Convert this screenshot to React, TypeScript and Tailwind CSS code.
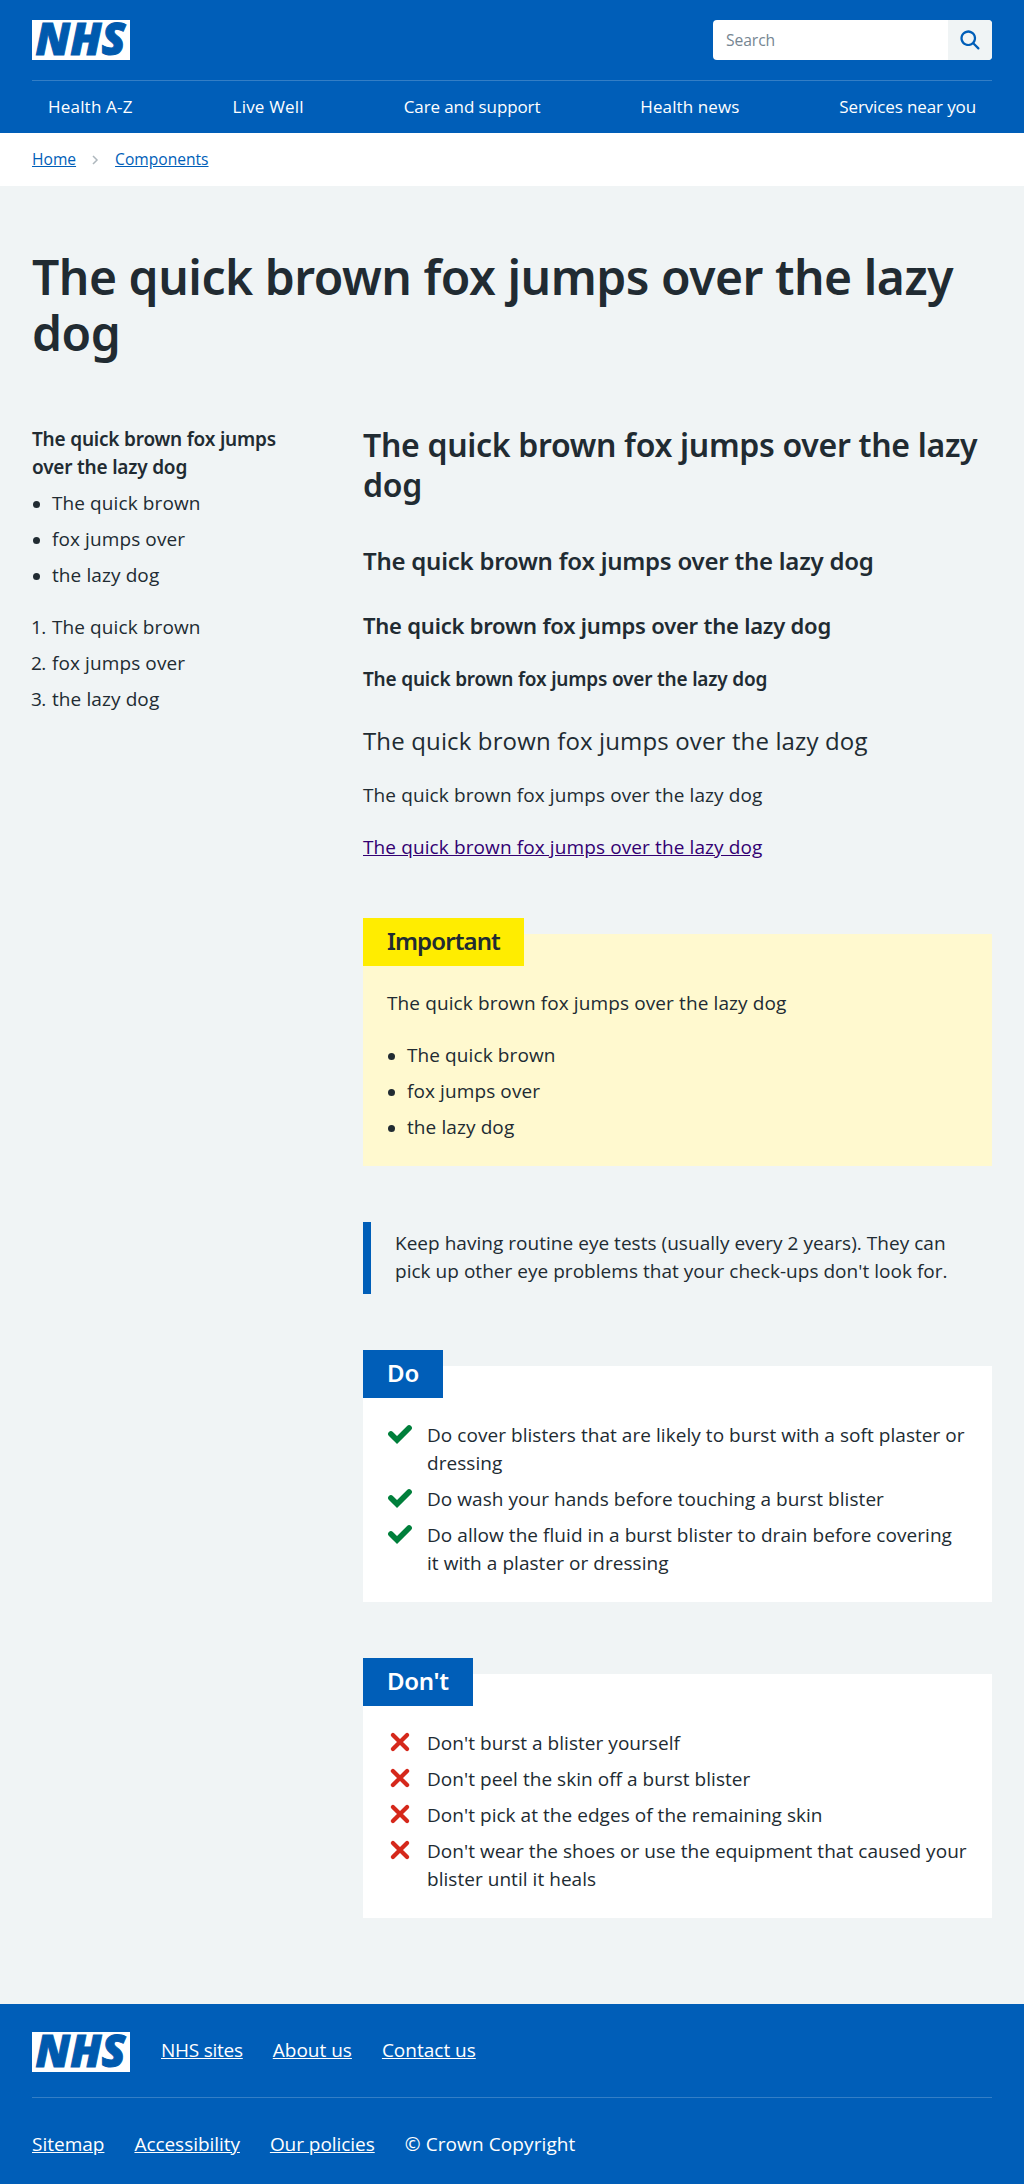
import type { ReactNode } from "react";

const PANGRAM = "The quick brown fox jumps over the lazy dog";
const LINES = ["The quick brown", "fox jumps over", "the lazy dog"];

function Logo() {
  return (
    <svg width="98" height="40" viewBox="0 0 98 40" role="img" aria-label="NHS" className="block shrink-0 overflow-visible">
      <rect width="98" height="40" fill="#fff" />
      <text
        x="3.5"
        y="35.3"
        fontSize="44.6"
        fontWeight="800"
        fontStyle="italic"
        textLength="90"
        lengthAdjust="spacingAndGlyphs"
        fill="#005aae"
        stroke="#005aae"
        strokeWidth="1"
        className="font-['Open_Sans',sans-serif]"
      >
        NHS
      </text>
    </svg>
  );
}

function SearchIcon() {
  return (
    <svg width="27" height="27" viewBox="0 0 24 24" fill="#005eb8" aria-hidden="true">
      <path d="M19.71 18.29l-4.11-4.1a7 7 0 1 0-1.41 1.41l4.1 4.11a1 1 0 0 0 1.42 0 1 1 0 0 0 0-1.42zM5 10a5 5 0 1 1 5 5 5 5 0 0 1-5-5z" />
    </svg>
  );
}

function Tick() {
  return (
    <svg width="34" height="34" viewBox="0 0 24 24" fill="none" stroke="#007f3b" strokeWidth="4" strokeLinecap="round" aria-hidden="true">
      <path d="M18.4 7.8l-8.5 8.4L5.6 12" />
    </svg>
  );
}

function Cross() {
  return (
    <svg width="34" height="34" viewBox="0 0 24 24" fill="none" stroke="#d5281b" strokeWidth="3" strokeLinecap="round" aria-hidden="true">
      <path d="M7 7l10 10M17 7L7 17" />
    </svg>
  );
}

function BulletList() {
  return (
    <ul className="flex flex-col gap-2 tracking-[0.1px]">
      {LINES.map((line) => (
        <li key={line} className="flex">
          <span className="mt-[11.5px] ml-[0.5px] mr-[12.5px] size-[7px] shrink-0 rounded-full bg-[#212b32]" />
          {line}
        </li>
      ))}
    </ul>
  );
}

function Card({ label, labelClass, bodyClass, children }: { label: string; labelClass: string; bodyClass: string; children: ReactNode }) {
  return (
    <section className={`mt-[72px] flex flex-col px-6 pb-[25px] ${bodyClass}`}>
      <h3 className={`-ml-6 -mt-4 mb-[23px] h-12 px-6 pt-[7px] font-['Noto_Sans',sans-serif] text-2xl leading-8 font-semibold whitespace-nowrap ${labelClass}`}>
        {label}
      </h3>
      {children}
    </section>
  );
}

function IconList({ icon, items, className }: { icon: ReactNode; items: string[]; className: string }) {
  return (
    <ul className={`flex flex-col gap-2 ${className}`}>
      {items.map((item) => (
        <li key={item} className="flex">
          <span className="-mt-1 -mb-2 -ml-1 mr-[10px] h-[34px] w-[34px] shrink-0">{icon}</span>
          <span>{item}</span>
        </li>
      ))}
    </ul>
  );
}

export default function App() {
  return (
    <div className="w-full bg-[#f0f4f5] font-['Open_Sans','Noto_Sans',sans-serif] text-[19px] leading-7 text-[#212b32]">
      <header className="bg-[#005eb8] px-8 text-white">
        <div className="flex items-start justify-between pt-5 pb-5">
          <Logo />
          <div className="flex h-10 w-[279px] overflow-hidden rounded bg-white">
            <div className="flex-1 pl-[13px] pt-[6px] text-[15.7px] tracking-[-0.1px] text-[#768692]">Search</div>
            <div className="w-11 bg-[#f0f4f5] pl-[9px] pt-[7px]">
              <SearchIcon />
            </div>
          </div>
        </div>
        <nav className="flex h-[53px] justify-between border-t border-[#337ec6] px-4 pt-[12px] text-[17px]">
          <a className="tracking-[0.2px]">Health A-Z</a>
          <a className="tracking-[0.2px]">Live Well</a>
          <a className="tracking-[-0.1px]">Care and support</a>
          <a className="tracking-[0.1px]">Health news</a>
          <a className="tracking-[-0.12px]">Services near you</a>
        </nav>
      </header>

      <div className="flex h-[53px] items-start bg-white px-8 pt-[12px] text-[15.6px] text-[#005eb8]">
        <a className="underline">Home</a>
        <svg width="7" height="10" viewBox="0 0 7 10" fill="none" stroke="#aeb7bd" strokeWidth="1.5" className="mt-[10px] mr-4 ml-4" aria-hidden="true">
          <path d="M1 1l4 4-4 4" />
        </svg>
        <a className="underline">Components</a>
      </div>

      <main className="px-8 pt-[63px] pb-[86px]">
        <h1 className="font-['Noto_Sans',sans-serif] text-5xl leading-[56px] font-semibold tracking-[-0.476px]">{PANGRAM}</h1>
        <div className="mt-16 flex">
          <aside className="w-[331px] shrink-0">
            <h5 className="mb-2 w-[270px] font-['Noto_Sans',sans-serif] font-semibold tracking-[-0.2px]">{PANGRAM}</h5>
            <BulletList />
            <ol className="mt-6 flex flex-col gap-2 tracking-[0.1px]">
              {LINES.map((line, i) => (
                <li key={line} className="flex">
                  <span className="-ml-px w-[21px] tracking-[-0.6px]">{i + 1}.</span>
                  {line}
                </li>
              ))}
            </ol>
          </aside>
          <div className="flex-1">
            <div className="font-['Noto_Sans',sans-serif] font-semibold">
              <h2 className="mb-10 text-[32px] leading-10 tracking-[-0.31px]">{PANGRAM}</h2>
              <h3 className="mb-8 text-2xl leading-8 tracking-[-0.24px]">{PANGRAM}</h3>
              <h4 className="mb-6 text-[22px] leading-8 tracking-[-0.22px]">{PANGRAM}</h4>
              <h5 className="mb-8 tracking-[-0.19px]">{PANGRAM}</h5>
            </div>
            <p className="mb-6 text-2xl leading-8 tracking-[0.14px]">{PANGRAM}</p>
            <p className="mb-6 tracking-[0.11px]">{PANGRAM}</p>
            <p className="pb-px tracking-[0.11px]">
              <a className="text-[#330072] underline">{PANGRAM}</a>
            </p>

            <Card label="Important" labelClass="w-[161px] bg-[#ffed00] tracking-[-0.9px]" bodyClass="bg-[#fff9cf]">
              <p className="mb-6 tracking-[0.11px]">{PANGRAM}</p>
              <BulletList />
            </Card>

            <div className="mt-14 h-[72px] border-l-8 border-[#005eb8] pt-[7px] pl-6 tracking-[0.03px]">
              Keep having routine eye tests (usually every 2 years). They can
              <br />
              pick up other eye problems that your check-ups don't look for.
            </div>

            <Card label="Do" labelClass="w-20 bg-[#005eb8] text-white" bodyClass="bg-white">
              <IconList
                icon={<Tick />}
                className="pr-[2px] tracking-[0.05px]"
                items={[
                  "Do cover blisters that are likely to burst with a soft plaster or dressing",
                  "Do wash your hands before touching a burst blister",
                  "Do allow the fluid in a burst blister to drain before covering it with a plaster or dressing",
                ]}
              />
            </Card>

            <Card label="Don't" labelClass="w-[110px] bg-[#005eb8] tracking-[-0.3px] text-white" bodyClass="bg-white">
              <IconList
                icon={<Cross />}
                className="tracking-[0.04px]"
                items={[
                  "Don't burst a blister yourself",
                  "Don't peel the skin off a burst blister",
                  "Don't pick at the edges of the remaining skin",
                  "Don't wear the shoes or use the equipment that caused your blister until it heals",
                ]}
              />
            </Card>
          </div>
        </div>
      </main>

      <footer className="h-[180px] bg-[#005eb8] px-8 pt-7 text-white">
        <div className="flex gap-[30px] border-b border-[#337ec6] pb-[25px]">
          <Logo />
          <a className="mt-1 ml-px tracking-[-0.25px] underline">NHS sites</a>
          <a className="mt-1 underline">About us</a>
          <a className="mt-1 underline">Contact us</a>
        </div>
        <div className="mt-8 flex gap-[30px]">
          <a className="underline">Sitemap</a>
          <a className="tracking-[-0.05px] underline">Accessibility</a>
          <a className="tracking-[-0.05px] underline">Our policies</a>
          <span className="tracking-[0.1px]">© Crown Copyright</span>
        </div>
      </footer>
    </div>
  );
}
